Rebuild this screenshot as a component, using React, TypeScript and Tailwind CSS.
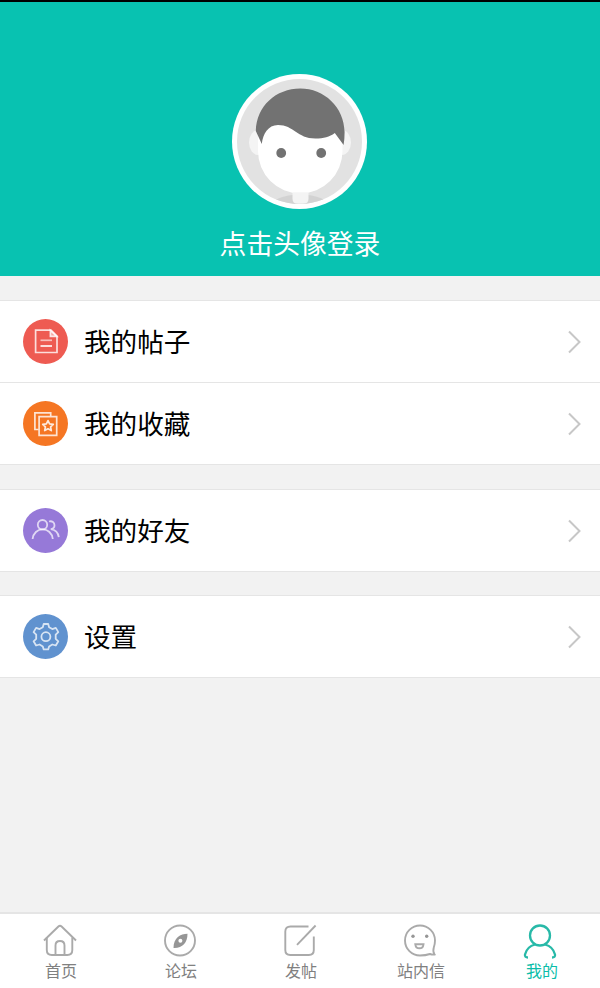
import React from "react";

const PostIcon = () => (
  <svg viewBox="0 0 45 45" className="size-[45px] shrink-0" fill="none" stroke="#fff" strokeOpacity=".8" strokeWidth="1.7">
    <circle cx="22.5" cy="22.5" r="22.5" fill="#ee5b52" stroke="none" />
    <path d="M12.6 11.2H28l6 6v16.3H12.6z" />
    <path d="M27.4 11.4v6h6.4z" fill="#fff" fillOpacity=".45" />
    <path d="M17.5 21.3h11.5" strokeOpacity=".6" />
    <path d="M17.5 27h11.5" strokeWidth="2" />
  </svg>
);

const FavoriteIcon = () => (
  <svg viewBox="0 0 45 45" className="size-[45px] shrink-0" fill="none" stroke="#fff" strokeOpacity=".8" strokeWidth="1.7">
    <circle cx="22.5" cy="22.5" r="22.5" fill="#f57623" stroke="none" />
    <path d="M27.7 15v-3.2H11.9v16.7h3.6" />
    <path d="M16.1 15.7h17.6v18.6H16.1z" />
    <path d="M25 19.6l1.600 3.300 3.700.5-2.700 2.500.7 3.700-3.300-1.800-3.300 1.800.7-3.700-2.700-2.500 3.700-.5z" strokeWidth="1.7" strokeOpacity=".85" strokeLinejoin="round" />
  </svg>
);

const FriendsIcon = () => (
  <svg viewBox="0 0 45 45" className="size-[45px] shrink-0" fill="none" stroke="#fff" strokeOpacity=".7" strokeWidth="1.8">
    <circle cx="22.5" cy="22.5" r="22.5" fill="#9679d8" stroke="none" />
    <circle cx="19.5" cy="16.7" r="4.7" />
    <path d="M9.6 31c.7-5.800 4.800-9.600 10-9.600 5.300 0 9.500 3.800 10.200 9.600" />
    <path d="M26 13.500c3.200-.9 5.500 1.200 5.500 3.700 0 2-1.300 3.600-3.700 3.900 4.700.6 7.400 3.600 8 8.100" />
  </svg>
);

const SettingsIcon = () => (
  <svg viewBox="0 0 45 45" className="size-[45px] shrink-0" fill="none" stroke="#fff" strokeOpacity=".75" strokeWidth="1.8" strokeLinejoin="round">
    <circle cx="22.5" cy="22.5" r="22.5" fill="#6092cf" stroke="none" />
    <circle cx="22.9" cy="22.7" r="4.5" />
    <path d="M20.700 10h4.500l.9 3.200 3.200 1.900 3.500-1.200 2.500 4.200-2.600 2.500v4.200l2.600 2.500-2.500 4.200-3.500-1-3.200 1.900-.9 3h-4.500l-.9-3-3.200-1.900-3.500 1-2.500-4.200 2.600-2.500v-4.200l-2.600-2.500 2.500-4.200 3.500 1.200 3.200-1.900z" />
  </svg>
);

const Avatar = () => (
  <svg viewBox="0 0 135 135" className="size-[135px]">
    <defs>
      <clipPath id="portrait">
        <circle cx="67.5" cy="67.5" r="62.5" />
      </clipPath>
    </defs>
    <circle cx="67.5" cy="67.5" r="67.5" fill="#fff" />
    <g clipPath="url(#portrait)">
      <rect width="135" height="135" fill="#e2e2e2" />
      <ellipse cx="68" cy="133" rx="30" ry="12.5" fill="#d2d2d2" />
      <ellipse cx="26" cy="68.5" rx="9" ry="12.5" fill="#f4f4f4" />
      <ellipse cx="110" cy="68.5" rx="9" ry="12.5" fill="#f4f4f4" />
      <path d="M26 60q4-15 15-15h55q10 0 14.500 15v17a42.250 42.500 0 0 1-84.500 0z" fill="#fff" />
      <path d="M60.500 118.300h16v6.500q0 5-5 5h-6q-5 0-5-5z" fill="#f4f4f4" />
      <path d="M29.800 70L23.800 57C24.500 32 44 14.500 68.300 14.500C92 14.500 112.300 33 112.600 58q0 7-1 13l-8.800-12c-5.500 4-10.800 5.500-19.500 5.500C65 64.500 62 51 46 51c-10 0-15 9-16.200 19z" fill="#727272" />
      <circle cx="49.2" cy="79" r="4.900" fill="#727272" />
      <circle cx="89.2" cy="79" r="4.900" fill="#727272" />
    </g>
  </svg>
);

const Row = ({ icon, label }: { icon: React.ReactNode; label: string }) => (
  <a className="flex h-[82px] items-center border-b border-[#e5e5e5] bg-white pr-[18px] pl-[23px]">
    {icon}
    <span className="ml-4 flex-1 pb-px text-[26.6px] leading-10 text-black">{label}</span>
    <svg viewBox="0 0 15 24" className="h-6 w-[15px]" fill="none" stroke="#c7c7c7" strokeWidth="2">
      <path d="M2 1.500l10.500 10.500L2 22.500" />
    </svg>
  </a>
);

const HomeIcon = () => (
  <>
    <path d="M3.800 14.500v12.500q0 5 5 5h15.500q5 0 5-5v-12.500" />
    <path d="M1 17.500L15.400 3.500q1.600-1.500 3.200 0L33 17.500" />
    <path d="M12.500 32v-9.500q0-4.500 4.500-4.500t4.500 4.500V32" />
  </>
);

const ForumIcon = () => (
  <>
    <circle cx="17" cy="17.5" r="15" />
    <path fillRule="evenodd" fill="#969696" stroke="none" d="M24.500 10.800c-7 0-14 4-14 14.200 8.500.5 14-5 14-14.200zM17.400 15.700a2 2 0 1 0 0 4 2 2 0 0 0 0-4z" />
  </>
);

const PublishIcon = () => (
  <>
    <path d="M25.500 3.500H7.500Q2.300 3.500 2.300 8.500v18.500q0 5 5 5h18.500q5 0 5-5V13.500" />
    <path d="M14 21.800L32.600 2.500" />
  </>
);

const MessageIcon = () => (
  <>
    <path d="M27 31Q22.500 32.500 17 32.500A15 15 0 1 1 32 17.500Q32 21 30.800 24.500C30 27 30.500 30 31.500 31.500Q29.500 32 27 31z" />
    <circle cx="10" cy="13.3" r="1.7" fill="#969696" stroke="none" />
    <circle cx="23.7" cy="13.3" r="1.7" fill="#969696" stroke="none" />
    <path d="M12.300 21.300h8.200q-.5 4-4.100 4t-4.100-4z" />
  </>
);

const MineIcon = () => (
  <>
    <circle cx="17" cy="12.5" r="10" strokeWidth="2.3" />
    <path d="M5 34.500Q1.500 34.500 2 31.500 4 23.500 12 21.500M29 34.500q3.500 0 3-3-2-8-10-10" strokeWidth="2.3" />
  </>
);

const Tab = ({ label, active, children }: { label: string; active?: boolean; children: React.ReactNode }) => (
  <a className={`flex flex-1 flex-col items-center pt-[9px] ${active ? "text-[#0bbda9]" : "text-[#808080]"}`}>
    <svg viewBox="0 0 34 36" className="h-9 w-[34px]" fill="none" stroke={active ? "#28b9a8" : "#aaa"} strokeWidth="1.9">
      {children}
    </svg>
    <span className={`-mt-px text-base leading-6 ${active ? "ml-1" : "ml-0.5"}`}>{label}</span>
  </a>
);

export default function App() {
  return (
    <div className="flex h-[988px] w-[600px] flex-col bg-[#f2f2f2] font-['Noto_Sans_CJK_SC',sans-serif] font-normal">
      <header className="flex h-[276px] flex-col items-center border-t-2 border-black bg-[#08c2b1] pt-[71.5px] pr-px">
        <Avatar />
        <span className="mt-3.5 ml-px text-[26.8px] leading-10 text-white">点击头像登录</span>
      </header>
      <main className="flex-1">
        <section className="mt-6 border-t border-[#e5e5e5]">
          <Row icon={<PostIcon />} label="我的帖子" />
          <Row icon={<FavoriteIcon />} label="我的收藏" />
        </section>
        <section className="mt-6 border-t border-[#e5e5e5]">
          <Row icon={<FriendsIcon />} label="我的好友" />
        </section>
        <section className="mt-[23px] border-t border-[#e5e5e5]">
          <Row icon={<SettingsIcon />} label="设置" />
        </section>
      </main>
      <nav className="flex h-[76px] border-t-2 border-[#e5e5e5] bg-white">
        <Tab label="首页"><HomeIcon /></Tab>
        <Tab label="论坛"><ForumIcon /></Tab>
        <Tab label="发帖"><PublishIcon /></Tab>
        <Tab label="站内信"><MessageIcon /></Tab>
        <Tab label="我的" active><MineIcon /></Tab>
      </nav>
    </div>
  );
}
